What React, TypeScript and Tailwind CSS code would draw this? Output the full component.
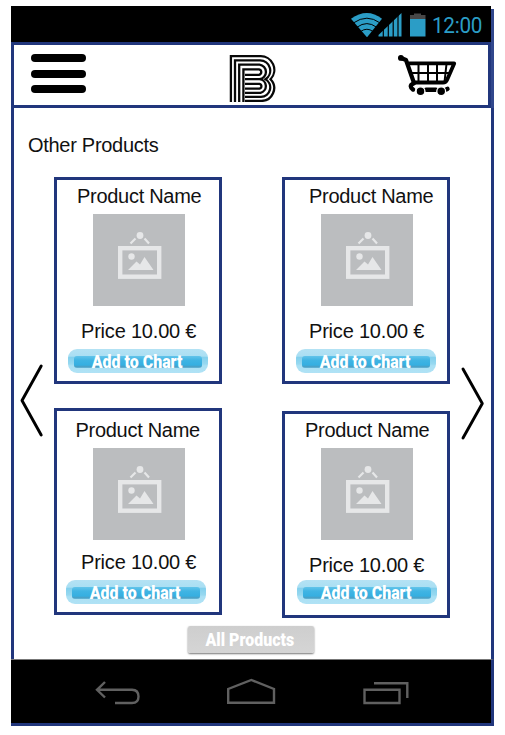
import React from "react";

type CardProps = {
  nameClass: string;
  priceClass: string;
  buttonClass: string;
};

function Placeholder() {
  return (
    <div className="ml-9 mt-[6px] h-[92px] w-[92px] shrink-0 bg-[#bbbdbf]">
      <svg viewBox="0 0 92 92" className="block h-full w-full" fill="none">
        <circle cx="47" cy="21.5" r="3.4" fill="#e6e7e8" />
        <path d="M42.5 24.5 37.5 29.5M51.5 24.5 56 29.5" stroke="#e6e7e8" strokeWidth="2.2" />
        <rect x="27.2" y="34.2" width="39" height="28.5" stroke="#e6e7e8" strokeWidth="4.4" />
        <circle cx="38.5" cy="42.5" r="3.2" fill="#e6e7e8" />
        <path d="M35 56 43.5 47.5 47 50.5 51.5 43 60.5 56Z" fill="#e6e7e8" />
      </svg>
    </div>
  );
}

function AddButton({ className }: { className: string }) {
  return (
    <button
      className={`flex h-6 w-[140px] shrink-0 items-center justify-center rounded-[9px] bg-[linear-gradient(#b4e2f4_0%,#aadff3_30%,#83d0ed_34%,#97d8f0_62%,#aae0f4_70%,#b0e2f5_100%)] ${className}`}
    >
      <span className="mt-[2px] flex h-[12px] w-[128px] items-center justify-center rounded-[3px] bg-[linear-gradient(#62c4ea_0%,#40b4e3_35%,#36afe1_75%,#4c9fc3_90%,#6cbbdc_100%)]">
        <span className="mr-[2px] inline-block scale-x-[0.84] whitespace-nowrap font-[Roboto,sans-serif] text-[19px] font-black leading-6 tracking-normal text-white">
          Add to Chart
        </span>
      </span>
    </button>
  );
}

function Card({ nameClass, priceClass, buttonClass }: CardProps) {
  return (
    <article className="flex h-[207px] w-[168px] shrink-0 flex-col items-start border-[3px] border-[#21367c]">
      <h3 className={`whitespace-nowrap leading-6 ${nameClass}`}>Product Name</h3>
      <Placeholder />
      <p className={`whitespace-nowrap leading-6 tracking-[-0.2px] ${priceClass}`}>Price 10.00 €</p>
      <AddButton className={buttonClass} />
    </article>
  );
}

function StatusBar() {
  return (
    <div className="flex h-9 w-[480px] items-start bg-black text-[#2b9dc6]">
      <svg className="ml-[340px] mt-[7px] h-6 w-[76px]" viewBox="351 13 76 24" fill="none">
        <path d="M351 18.7Q367 7.3 382 18.7L367 37.3Z" fill="#2b9dc6" />
        <path d="M353.5 22.9Q367 13.5 380 22.9M357 27.2Q367 20 376.5 27.2M360.5 31.5Q367 27 373 31.5" stroke="#000" strokeWidth="1" />
        <path d="M378.5 36.5V35L401.5 13V36.5Z" fill="#2b9dc6" />
        <path d="M383.3 13V37M388.3 13V37M393.2 13V37M398 13V37" stroke="#000" strokeWidth="1.2" />
        <path d="M410 19V15H414V13.5H421V15H425.5V19Z" fill="#484848" />
        <path d="M410 19H425.5V36.5H410Z" fill="#2b9dc6" />
      </svg>
      <span className="ml-[5px] mt-[6px] origin-left scale-x-[0.92] whitespace-nowrap font-[Roboto,sans-serif] text-[22.5px] leading-[26px]">
        12:00
      </span>
    </div>
  );
}

function Logo() {
  return (
    <svg className="h-[48px] w-[48px]" viewBox="229 54 48 48" fill="none" stroke="#080808" strokeWidth="2.3">
      <path d="M230.9 102V56.2H260A13.6 13.6 0 0 1 270.5 79.2A12.8 12.8 0 0 1 261 100.9H245" />
      <path d="M235 102V60.4H260A10.2 10.2 0 0 1 265.5 79.2A9.5 9.5 0 0 1 261 96.9H245" />
      <path d="M239.2 102V64.7H259.5A7.3 7.3 0 0 1 259.5 79.2H245M259.5 79.2A6.9 6.9 0 0 1 260.5 92.8H245" />
      <path d="M243.4 102V69.3H259A2.8 2.8 0 0 1 259 74.8H245M245 83.9H259.5A2.4 2.4 0 0 1 259.5 88.6H245" />
    </svg>
  );
}

function Cart() {
  return (
    <svg className="h-[43px] w-[60px]" viewBox="397 54 60 43" fill="none" stroke="#000" strokeLinecap="round" strokeLinejoin="round">
      <path d="M400.5 57.8 406 60 414 83" strokeWidth="4.2" />
      <circle cx="400.9" cy="57.9" r="2.9" fill="#000" stroke="none" />
      <path d="M409 63.4H454.2L447 80Q446 82.5 443 82.5H414" strokeWidth="3.8" />
      <path d="M411.5 73H450M418.5 64V82M428 64V82M437 64V82M446.5 64 444.5 82" strokeWidth="2" />
      <path d="M413.5 83.5C409.5 85 410.5 88 413 89.5M426 89.7H436M446 89.7 447.5 88.8" strokeWidth="4.4" />
      <circle cx="420.5" cy="91.2" r="4.4" fill="#000" stroke="#fff" strokeWidth="1.3" />
      <circle cx="441.2" cy="91.2" r="4.4" fill="#000" stroke="#fff" strokeWidth="1.3" />
    </svg>
  );
}

function Header() {
  return (
    <header className="flex h-[66px] w-[480px] items-start border-[3px] border-[#21367c]">
      <button aria-label="Menu" className="ml-[17px] mt-[9px] flex flex-col gap-[7.7px]">
        <span className="h-2 w-[55px] rounded-full bg-black" />
        <span className="h-2 w-[55px] rounded-full bg-black" />
        <span className="h-2 w-[55px] rounded-full bg-black" />
      </button>
      <div className="ml-[143px] mt-[9px]"><Logo /></div>
      <div className="ml-[120px] mt-[9px]"><Cart /></div>
    </header>
  );
}

function NavBar() {
  return (
    <nav className="flex h-[67px] w-[483px] items-start border-b-[3px] border-r-[3px] border-t border-b-[#21367c] border-r-[#21367c] border-t-[#777] bg-black text-[#606060]">
      <svg className="ml-[83px] mt-[19px] h-[28px] w-[48px]" viewBox="94 679 48 28" fill="none" stroke="currentColor" strokeWidth="2.4">
        <path d="M105 682 97 689.8 105 697.5M97 689.8H132Q138.5 690 138.5 696.5T132 703H115" />
      </svg>
      <svg className="ml-[84px] mt-[17px] h-[30px] w-[52px]" viewBox="226 677 52 30" fill="none" stroke="currentColor" strokeWidth="2.4">
        <path d="M228.2 702.8V689L251.3 680 274 689V702.8Z" />
      </svg>
      <svg className="ml-[84px] mt-[19px] h-[28px] w-[50px]" viewBox="362 679 50 28" fill="none" stroke="currentColor" strokeWidth="2.4">
        <path d="M364.5 689.8H399.5V703H364.5ZM374 683.3H407.3V698" />
      </svg>
    </nav>
  );
}

export default function App() {
  return (
    <div className="h-[735px] w-[505px] overflow-hidden bg-white pl-[11px] pt-[6px] font-['Liberation_Sans',Arial,sans-serif] text-[20px] tracking-[-0.29px] text-[#111]">
      <div className="w-[483px]">
        <div className="flex">
          <div>
            <StatusBar />
            <Header />
          </div>
          <div className="mt-[3px] w-[3px] bg-[#31478c]" />
        </div>
        <main className="h-[551px] border-x-[3px] border-[#21367c]">
          <h2 className="pl-[14px] pt-[25px] leading-6">Other Products</h2>
          <div className="flex h-[461px] pt-5">
            <button aria-label="Previous" className="mt-[186px] h-[76px] w-[30px] shrink-0">
              <svg className="h-full w-full" viewBox="14 363 30 76" fill="none" stroke="#000" strokeWidth="2.9" strokeLinecap="round" strokeLinejoin="round">
                <path d="M41.2 366 22 400.5 41.2 435" />
              </svg>
            </button>
            <div className="ml-[10px] flex flex-col gap-6">
              <Card nameClass="ml-[20px] mt-1" priceClass="ml-[24px] mt-[13px]" buttonClass="ml-[11px] mt-[6px]" />
              <Card nameClass="ml-[18.5px] mt-[7px]" priceClass="ml-[24px] mt-[10px]" buttonClass="ml-[9px] mt-[6px]" />
            </div>
            <div className="ml-[60px] flex flex-col gap-[27px]">
              <Card nameClass="ml-[24px] mt-1" priceClass="ml-[24px] mt-[13px]" buttonClass="ml-[11px] mt-[6px]" />
              <Card nameClass="ml-[20px] mt-1" priceClass="ml-[24px] mt-[13px]" buttonClass="ml-[12px] mt-[3px]" />
            </div>
            <button aria-label="Next" className="ml-[9px] mt-[189px] h-[76px] w-[28px] shrink-0">
              <svg className="h-full w-full" viewBox="459 366 28 76" fill="none" stroke="#000" strokeWidth="2.9" strokeLinecap="round" strokeLinejoin="round">
                <path d="M463 369 482.3 403.5 463 438" />
              </svg>
            </button>
          </div>
          <button className="ml-[174px] mt-[8px] flex h-[27px] w-[126px] items-center justify-center rounded-[2px] bg-[linear-gradient(#cecece,#d5d5d5)] shadow-[0_1px_2px_#777]">
            <span className="mr-[2px] inline-block scale-x-[0.84] whitespace-nowrap font-[Roboto,sans-serif] text-[19px] font-black leading-6 tracking-normal text-white">
              All Products
            </span>
          </button>
        </main>
        <NavBar />
      </div>
    </div>
  );
}
